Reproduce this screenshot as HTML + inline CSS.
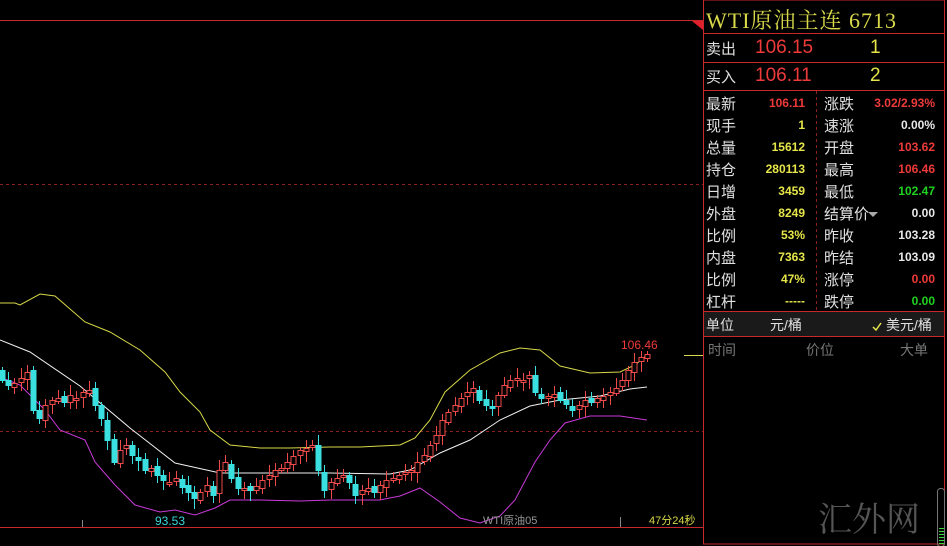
<!DOCTYPE html>
<html><head><meta charset="utf-8"><style>
body{margin:0;width:947px;height:546px;background:#000;overflow:hidden;position:relative;font-family:"Liberation Sans","Noto Sans CJK SC",sans-serif}
.a{position:absolute;white-space:nowrap}
.l{color:#e0e0e0;font-size:14px}
.v{font-weight:bold;font-size:12px;text-align:right}
.y{color:#e6e64a}.r{color:#ef3a3a}.g{color:#1fd21f}.w{color:#e8e8e8}
</style></head><body>
<svg width="947" height="546" style="position:absolute;left:0;top:0" id="s">
<line x1="0" y1="20.5" x2="703" y2="20.5" stroke="#c8282d"/>
<polygon points="692,21 703,21 703,30" fill="#e0202a"/>
<line x1="0" y1="184.5" x2="703" y2="184.5" stroke="#8a2020" stroke-dasharray="3,3"/>
<line x1="0" y1="431.5" x2="703" y2="431.5" stroke="#8a2020" stroke-dasharray="3,3"/>
<line x1="0" y1="527.5" x2="703" y2="527.5" stroke="#c8282d"/>
<line x1="684" y1="355.5" x2="703" y2="355.5" stroke="#d8d84a"/>
<line x1="82.5" y1="520" x2="82.5" y2="527" stroke="#888"/>
<line x1="620.5" y1="517" x2="620.5" y2="527" stroke="#888"/>
<polyline fill="none" stroke="#d8d84a" points="0,303 15,303 20,305 40,294 55,296 85,322 110,332 140,350 165,372 180,392 200,412 210,430 230,445 260,448 290,448 330,447 360,447 380,446 400,445 415,438 430,420 445,392 470,370 500,353 520,348 540,350 560,366 590,373 620,372 635,365 647,355"/>
<polyline fill="none" stroke="#f0f0f0" points="0,340 30,352 80,386 130,428 175,463 220,473 280,473 330,473 390,474 410,470 440,453 470,440 500,420 530,406 560,400 600,396 630,389 647,387"/>
<polyline fill="none" stroke="#c83ad8" points="0,377 20,385 45,410 60,430 85,440 95,462 115,485 135,505 160,512 175,510 195,515 215,508 230,500 260,500 300,501 330,500 380,500 400,496 420,488 440,502 460,518 480,523 500,516 515,500 535,462 550,440 565,423 590,416 620,416 647,420"/>
<g id="c"></g>
<text x="155" y="525" fill="#3ad8d8" font-size="12" font-family="Liberation Sans">93.53</text>
<text x="621" y="349" fill="#ef3a3a" font-size="12" font-family="Liberation Sans">106.46</text>
<text x="483" y="524" fill="#999" font-size="11" font-family="Liberation Sans,Noto Sans CJK SC">WTI原油05</text>
<text x="649" y="524" fill="#d8d84a" font-size="11" font-family="Liberation Sans,Noto Sans CJK SC">47分24秒</text>
<rect x="703.5" y="0" width="241" height="544" fill="none" stroke="#c8282d"/>
<line x1="704" y1="33.5" x2="944" y2="33.5" stroke="#c8282d"/>
<line x1="704" y1="62.5" x2="944" y2="62.5" stroke="#c8282d"/>
<line x1="704" y1="90.5" x2="944" y2="90.5" stroke="#c8282d"/>
<line x1="816.5" y1="91" x2="816.5" y2="310" stroke="#8a2020" stroke-dasharray="3,3"/>
<rect x="704" y="311" width="240" height="25" fill="#1a1a1a"/>
<line x1="704" y1="311.5" x2="944" y2="311.5" stroke="#c8282d"/>
<line x1="704" y1="336.5" x2="944" y2="336.5" stroke="#c8282d"/>
<polyline points="873,327 876,330 881,323" fill="none" stroke="#e6e64a" stroke-width="1.5"/>
<polygon points="868,212 878,212 873,217" fill="#aaa"/>
<rect x="937.5" y="488.5" width="7" height="58" rx="3" fill="none" stroke="#777"/>
<g stroke="#3ad83a"><line x1="939" y1="528.5" x2="944" y2="528.5"/><line x1="939" y1="531.5" x2="944" y2="531.5"/><line x1="939" y1="534.5" x2="944" y2="534.5"/><line x1="939" y1="537.5" x2="944" y2="537.5"/><line x1="939" y1="540.5" x2="944" y2="540.5"/><line x1="939" y1="543.5" x2="944" y2="543.5"/></g>
</svg>
<div class="a" style="left:706px;top:4px;font-size:22px;letter-spacing:1px;color:#d8d84a;font-family:'Liberation Serif','Noto Serif CJK SC',serif">WTI原油主连 6713</div>
<div class="a l" style="left:706px;top:38px;font-size:15px">卖出</div>
<div class="a r" style="left:755px;top:37px;font-size:19px">106.15</div>
<div class="a y" style="left:870px;top:37px;font-size:19px">1</div>
<div class="a l" style="left:706px;top:66px;font-size:15px">买入</div>
<div class="a r" style="left:755px;top:65px;font-size:19px">106.11</div>
<div class="a y" style="left:870px;top:65px;font-size:19px">2</div>
<div id="rows"></div>
<div class="a l" style="left:706px;top:315px">单位</div>
<div class="a l" style="left:770px;top:315px">元/桶</div>
<div class="a l" style="left:886px;top:315px">美元/桶</div>
<div class="a" style="left:708px;top:340px;font-size:14px;color:#777">时间</div>
<div class="a" style="left:806px;top:340px;font-size:14px;color:#777">价位</div>
<div class="a" style="left:900px;top:340px;font-size:14px;color:#777">大单</div>
<div class="a" style="left:818px;top:492px;font-size:34px;color:#555;font-family:'Liberation Serif','Noto Serif CJK SC',serif">汇外网</div>
<script>
var rows=[["最新","106.11","r","涨跌","3.02/2.93%","r"],["现手","1","y","速涨","0.00%","w"],["总量","15612","y","开盘","103.62","r"],["持仓","280113","y","最高","106.46","r"],["日增","3459","y","最低","102.47","g"],["外盘","8249","y","结算价","0.00","w"],["比例","53%","y","昨收","103.28","w"],["内盘","7363","y","昨结","103.09","w"],["比例","47%","y","涨停","0.00","r"],["杠杆","-----","y","跌停","0.00","g"]];
var h="";rows.forEach(function(r,i){var t=93+i*22;
h+='<div class="a l" style="left:706px;font-size:15px;top:'+t+'px">'+r[0]+'</div><div class="a v '+r[2]+'" style="left:740px;width:65px;top:'+(t+3)+'px">'+r[1]+'</div><div class="a l" style="left:824px;font-size:15px;top:'+t+'px">'+r[3]+'</div><div class="a v '+r[5]+'" style="left:860px;width:75px;top:'+(t+3)+'px">'+r[4]+'</div>';});
document.getElementById("rows").innerHTML=h;
var c=[380,385,383,378,372,410,418,405,400,398,402,395,398,392,390,405,418,440,462,450,445,455,460,470,468,475,480,482,478,487,492,498,492,485,495,470,462,478,488,488,490,486,480,475,470,468,462,456,450,448,445,470,490,482,478,475,482,495,490,488,492,485,480,478,475,472,470,462,455,445,435,420,412,405,398,392,388,400,405,408,395,385,380,378,380,375,392,398,396,394,400,404,410,405,400,402,398,396,392,388,380,370,362,357,354];
var s="",p=372;c.forEach(function(v,i){var x=Math.round(2+i*6.2)+.5,o=p+((i*7)%5-2);if(Math.abs(o-v)<2)o=v+2;var up=v<o,top=Math.min(o,v),b=Math.max(o,v),col=up?"#ef4a4a":"#3ae0e0";
var hi=top-3-(i*13)%8,lo=b+3+(i*11)%9;
s+='<line x1="'+x+'" x2="'+x+'" y1="'+hi+'" y2="'+lo+'" stroke="'+col+'"/>';
s+=up?'<rect x="'+(x-2.5)+'" y="'+(top+.5)+'" width="5" height="'+(b-top)+'" fill="#000" stroke="'+col+'"/>':'<rect x="'+(x-3)+'" y="'+top+'" width="6" height="'+(b-top+1)+'" fill="'+col+'"/>';p=v;});
document.getElementById("c").innerHTML=s;
</script>
</body></html>
